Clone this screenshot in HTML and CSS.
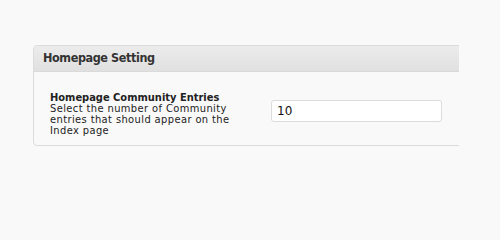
FILE: index.html
```html
<!DOCTYPE html>
<html>
<head>
<meta charset="utf-8">
<link rel="stylesheet" href="styles.css">
</head>
<body>
<div class="page">
  <div class="clip">
    <div class="panel">
      <div class="panel-head">Homepage Setting</div>
      <div class="panel-body">
        <div class="field-label">
          <div class="label-title">Homepage Community Entries</div>
          <div class="label-desc">Select the number of Community entries that should appear on the Index page</div>
        </div>
        <div class="field-input">
          <input class="text-input" type="text" value="10">
        </div>
      </div>
    </div>
  </div>
</div>
</body>
</html>
```
FILE: styles.css
```css
html, body {
  margin: 0;
  padding: 0;
  background: #f9f9f9;
}
.page {
  width: 500px;
  height: 200px;
  padding: 45px 0 0 33px;
  box-sizing: border-box;
  font-family: "DejaVu Sans Condensed", "DejaVu Sans", sans-serif;
  color: #222;
}
.clip {
  width: 426px;
  overflow: hidden;
}
.panel {
  width: 460px;
  border: 1px solid #dcdcdc;
  border-radius: 4px;
  background: #f9f9f9;
  box-sizing: border-box;
  overflow: hidden;
}
.panel-head {
  height: 26px;
  box-sizing: border-box;
  padding: 5px 0 0 9px;
  font-size: 12.5px;
  font-weight: bold;
  letter-spacing: -0.4px;
  line-height: 14px;
  color: #333;
  background: linear-gradient(#ececec, #e0e0e0);
  border-bottom: 1px solid #dadada;
}
.panel-body {
  display: grid;
  grid-template-columns: 221px 171px;
  padding: 20px 0 9px 16px;
}
.field-label {
  font-size: 11px;
  line-height: 11px;
}
.label-title {
  font-weight: bold;
  letter-spacing: 0;
}
.label-desc {
  width: 185px;
  letter-spacing: 0.4px;
}
.field-input {
  padding-top: 8px;
}
.text-input {
  display: block;
  width: 171px;
  height: 22px;
  box-sizing: border-box;
  margin: 0;
  padding: 0 5px;
  border: 1px solid #dcdcdc;
  border-radius: 3px;
  background: #fff;
  font-family: "DejaVu Sans", Verdana, sans-serif;
  font-size: 12px;
  color: #111;
  outline: none;
}
```
